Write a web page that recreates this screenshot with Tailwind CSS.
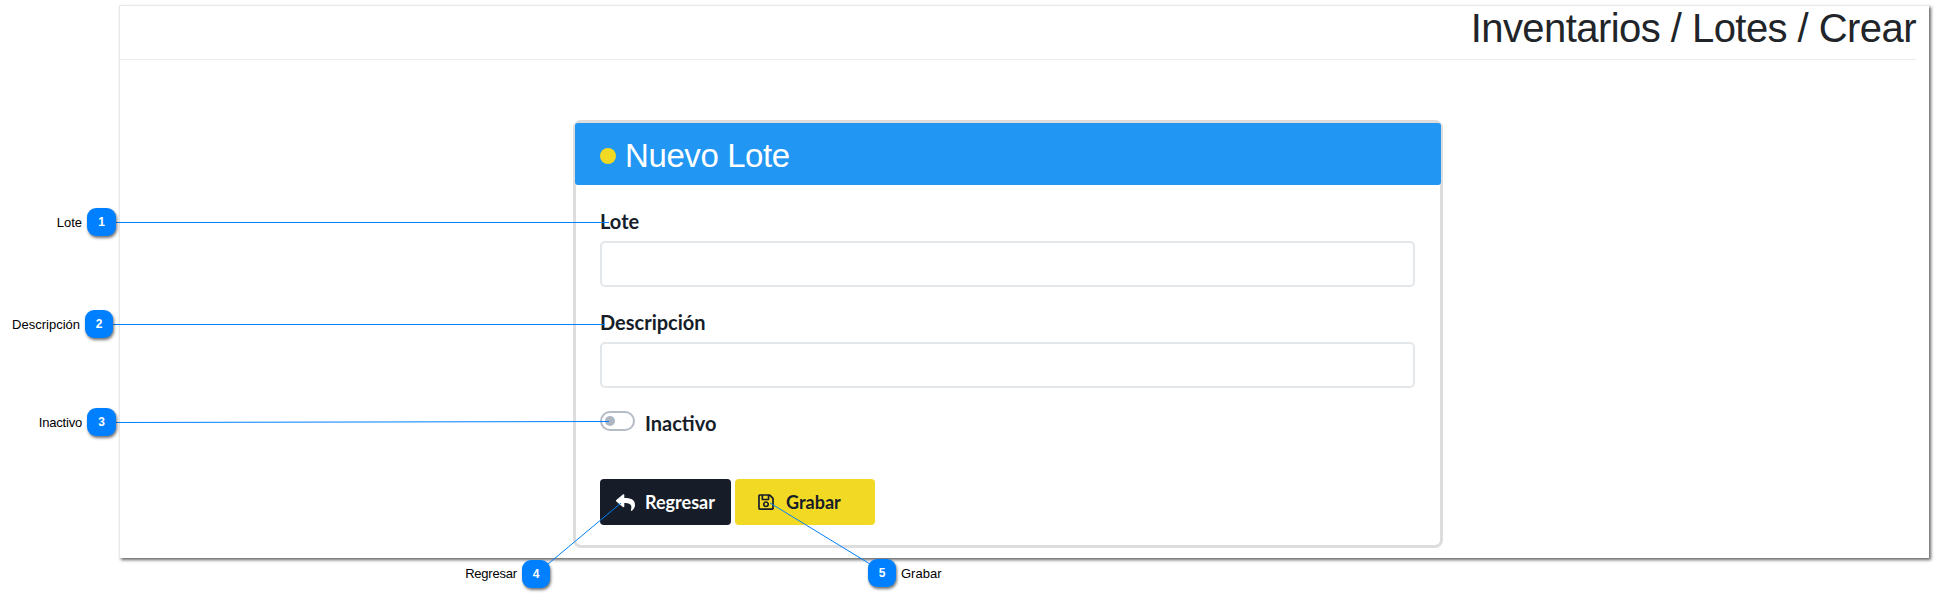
<!DOCTYPE html>
<html lang="es">
<head>
  <meta charset="UTF-8" />
  <title>Inventarios / Lotes / Crear</title>
  <script src="https://cdn.jsdelivr.net/npm/@tailwindcss/browser@4"></script>
</head>
<body class="bg-white">
<div class="relative w-[1937px] h-[599px] overflow-hidden bg-white pl-[119px] pt-[5px] font-['Liberation_Sans',sans-serif]">

  <!-- Ventana capturada -->
  <div class="w-[1810px] h-[553px] bg-white border-l border-t border-[#e8e8e8] shadow-[2px_2px_3px_rgba(0,0,0,0.6)] pr-[13px]">
    <div class="h-[54px] border-b border-[#ececec] flex justify-end items-start">
      <h1 class="text-[40px] leading-[44px] tracking-[-0.55px] text-[#212529]">Inventarios / Lotes / Crear</h1>
    </div>

    <!-- Tarjeta del formulario -->
    <div class="ml-[453px] mt-[60px] w-[870px] h-[428px] border-[3px] border-[#dddddd] rounded-lg bg-white">
      <div class="h-[62px] bg-[#2196f3] rounded-t-[3px] rounded-b-[3px] -ml-px -mr-px flex items-center pl-[25px] pt-[3px] gap-[9px] text-white">
        <span class="w-4 h-4 rounded-full bg-[#f2d924]"></span>
        <span class="text-[33px] leading-none tracking-[-0.4px]">Nuevo Lote</span>
      </div>

      <div class="pl-[24px] font-['Lato',sans-serif]">
        <label class="block mt-[24px] text-[20px] leading-[24px] font-bold text-[#161d29]">Lote</label>
        <input type="text" class="block mt-[8px] w-[815px] h-[46px] border-2 border-[#e4e7ea] rounded-[5px] bg-white" />

        <label class="block mt-[23px] text-[20px] leading-[24px] font-bold text-[#161d29]">Descripción</label>
        <input type="text" class="block mt-[8px] w-[815px] h-[46px] border-2 border-[#e4e7ea] rounded-[5px] bg-white" />

        <div class="flex items-center mt-[23px] h-[20px]">
          <span class="w-[35px] h-[20px] rounded-full border-2 border-[#b4bcc6] flex items-center pl-[3px]">
            <span class="w-[10px] h-[10px] rounded-full bg-[#aeb6c1]"></span>
          </span>
          <span class="ml-[10px] mt-[3px] text-[20px] font-bold text-[#161d29]">Inactivo</span>
        </div>

        <div class="flex gap-[4px] mt-[48px]">
          <button class="w-[131px] h-[46px] rounded-[4px] bg-[#161d29] text-white text-[18px] font-bold flex items-center pl-[16px] gap-[10px]">
            <svg class="w-[19px] h-[19px]" viewBox="0 0 512 512" fill="currentColor"><path d="M8.309 189.836L184.313 37.851C199.719 24.546 224 35.347 224 56.015v80.053c160.629 1.839 288 34.032 288 186.258 0 61.441-39.581 122.309-83.333 154.132-13.653 9.931-33.111-2.533-28.077-18.631 45.344-145.012-21.507-183.51-176.59-185.742V360c0 20.7-24.3 31.453-39.687 18.164l-176.004-152c-11.071-9.562-11.086-26.753 0-36.328z"/></svg>
            Regresar
          </button>
          <button class="w-[140px] h-[46px] rounded-[4px] bg-[#f2d924] text-[#161d29] text-[18px] font-bold flex items-center pl-[23px] gap-[12px]">
            <svg class="w-[16px] h-[18px]" viewBox="0 0 448 512" fill="currentColor"><path d="M433.941 129.941l-83.882-83.882A48 48 0 0 0 316.118 32H48C21.49 32 0 53.49 0 80v352c0 26.51 21.49 48 48 48h352c26.51 0 48-21.49 48-48V163.882a48 48 0 0 0-14.059-33.941zM272 80v80H144V80h128zm122 352H54a6 6 0 0 1-6-6V86a6 6 0 0 1 6-6h42v104c0 13.255 10.745 24 24 24h176c13.255 0 24-10.745 24-24V83.882l78.243 78.243a6 6 0 0 1 1.757 4.243V426a6 6 0 0 1-6 6zM224 232c-48.523 0-88 39.477-88 88s39.477 88 88 88 88-39.477 88-88-39.477-88-88-88zm0 128c-22.056 0-40-17.944-40-40s17.944-40 40-40 40 17.944 40 40-17.944 40-40 40z"/></svg>
            Grabar
          </button>
        </div>
      </div>
    </div>
  </div>

  <!-- Lineas de las anotaciones -->
  <svg class="absolute left-0 top-0 pointer-events-none" width="1937" height="599" fill="none" stroke="#0080ff" stroke-width="1">
    <line x1="116" y1="222.5" x2="609" y2="222.5" />
    <line x1="113" y1="324.5" x2="605" y2="324.5" />
    <line x1="116" y1="422.5" x2="609" y2="421.5" />
    <line x1="548" y1="564" x2="621" y2="503" />
    <line x1="870" y1="564" x2="770" y2="503" />
  </svg>

  <!-- Anotaciones -->
  <span class="absolute right-[1855px] top-[215px] text-[13px] leading-4 text-black">Lote</span>
  <span class="absolute left-[87px] top-[208px] w-[29px] h-[28px] rounded-[9px] bg-[#0080ff] shadow-[1px_2px_3px_rgba(0,0,0,0.55)] flex items-center justify-center text-white text-[12px] font-bold">1</span>

  <span class="absolute right-[1857px] top-[317px] text-[13px] leading-4 text-black">Descripción</span>
  <span class="absolute left-[85px] top-[310px] w-[28px] h-[28px] rounded-[9px] bg-[#0080ff] shadow-[1px_2px_3px_rgba(0,0,0,0.55)] flex items-center justify-center text-white text-[12px] font-bold">2</span>

  <span class="absolute right-[1855px] top-[415px] text-[13px] leading-4 tracking-[-0.2px] text-black">Inactivo</span>
  <span class="absolute left-[87px] top-[408px] w-[29px] h-[28px] rounded-[9px] bg-[#0080ff] shadow-[1px_2px_3px_rgba(0,0,0,0.55)] flex items-center justify-center text-white text-[12px] font-bold">3</span>

  <span class="absolute right-[1420px] top-[566px] text-[13px] leading-4 tracking-[-0.2px] text-black">Regresar</span>
  <span class="absolute left-[522px] top-[560px] w-[28px] h-[28px] rounded-[9px] bg-[#0080ff] shadow-[1px_2px_3px_rgba(0,0,0,0.55)] flex items-center justify-center text-white text-[12px] font-bold">4</span>

  <span class="absolute left-[868px] top-[559px] w-[28px] h-[28px] rounded-[9px] bg-[#0080ff] shadow-[1px_2px_3px_rgba(0,0,0,0.55)] flex items-center justify-center text-white text-[12px] font-bold">5</span>
  <span class="absolute left-[901px] top-[566px] text-[13px] leading-4 text-black">Grabar</span>
</div>
</body>
</html>
